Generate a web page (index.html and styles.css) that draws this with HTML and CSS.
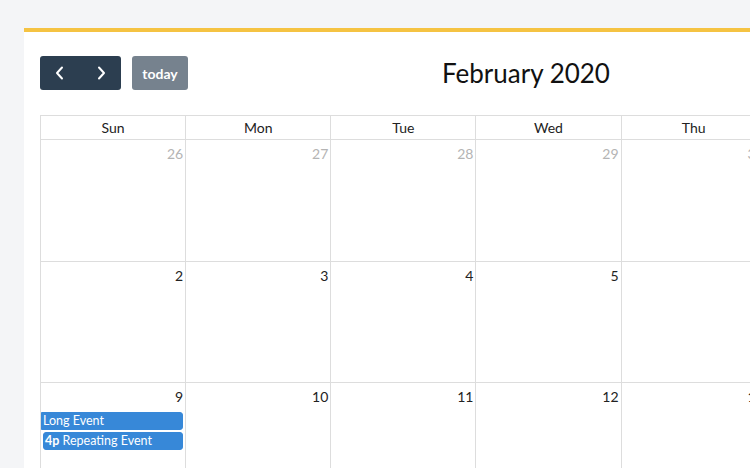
FILE: index.html
```html
<!DOCTYPE html>
<html lang="en">
<head>
<meta charset="utf-8">
<title>Calendar</title>
<link rel="stylesheet" href="styles.css">
</head>
<body>
<div class="card">
  <div class="toolbar">
    <div class="chunk">
      <div class="btn-group">
        <button class="btn btn-dark" aria-label="prev">
          <svg width="10" height="14" viewBox="0 0 10 14"><path d="M7 1.5 L2 7 L7 12.5" fill="none" stroke="#fff" stroke-width="2" stroke-linecap="round" stroke-linejoin="round"/></svg>
        </button>
        <button class="btn btn-dark" aria-label="next">
          <svg width="10" height="14" viewBox="0 0 10 14"><path d="M3 1.5 L8 7 L3 12.5" fill="none" stroke="#fff" stroke-width="2" stroke-linecap="round" stroke-linejoin="round"/></svg>
        </button>
      </div>
      <button class="btn btn-today">today</button>
    </div>
    <h2 class="title">February 2020</h2>
  </div>
  <table class="grid">
    <thead>
      <tr><th>Sun</th><th>Mon</th><th>Tue</th><th>Wed</th><th>Thu</th><th>Fri</th><th>Sat</th></tr>
    </thead>
    <tbody>
      <tr class="r1">
        <td><div class="num other">26</div></td>
        <td><div class="num other">27</div></td>
        <td><div class="num other">28</div></td>
        <td><div class="num other">29</div></td>
        <td><div class="num other">30</div></td>
        <td><div class="num other">31</div></td>
        <td><div class="num">1</div></td>
      </tr>
      <tr>
        <td><div class="num">2</div></td>
        <td><div class="num">3</div></td>
        <td><div class="num">4</div></td>
        <td><div class="num">5</div></td>
        <td><div class="num">6</div></td>
        <td><div class="num">7</div></td>
        <td><div class="num">8</div></td>
      </tr>
      <tr>
        <td>
          <div class="num">9</div>
          <div class="event not-start">Long Event</div>
          <div class="event"><b>4p</b> Repeating Event</div>
        </td>
        <td><div class="num">10</div></td>
        <td><div class="num">11</div></td>
        <td><div class="num">12</div></td>
        <td><div class="num">13</div></td>
        <td><div class="num">14</div></td>
        <td><div class="num">15</div></td>
      </tr>
    </tbody>
  </table>
</div>
</body>
</html>
```
FILE: styles.css
```css
html, body {
  margin: 0;
  padding: 0;
  overflow: hidden;
}
body {
  background: #f4f5f7;
  font-family: Lato, "Open Sans", sans-serif;
  color: #222;
  padding-top: 28px;
  padding-left: 24px;
}
.card {
  width: max-content;
  background: #fff;
  border-top: 4px solid #f5c343;
  padding: 24px 16px;
}
.toolbar {
  display: flex;
  align-items: center;
  height: 34px;
  margin-bottom: 25px;
}
.chunk {
  display: flex;
  gap: 11px;
}
.btn-group {
  display: flex;
}
.btn {
  border: none;
  height: 34px;
  font-family: inherit;
  font-size: 14px;
  font-weight: 700;
  color: #fff;
  padding: 0;
  display: flex;
  align-items: center;
  justify-content: center;
}
.btn-dark {
  background: #2c3e50;
  width: 40.5px;
}
.btn-dark:first-child {
  border-radius: 3px 0 0 3px;
}
.btn-dark:last-child {
  border-radius: 0 3px 3px 0;
}
.btn-today {
  background: #76828e;
  width: 56px;
  border-radius: 3px;
}
.title {
  margin: 0 0 0 254px;
  font-size: 26px;
  font-weight: 400;
  color: #111;
}
.grid {
  border-collapse: collapse;
  table-layout: fixed;
  width: 1017px;
}
.grid th, .grid td {
  border: 1px solid #ddd;
  padding: 0;
}
.grid th {
  height: 23px;
  font-size: 14px;
  font-weight: 400;
  text-align: center;
}
.grid td {
  height: 120px;
  vertical-align: top;
}
.grid .r1 td {
  height: 121px;
}
.num {
  text-align: right;
  font-size: 14px;
  line-height: 20px;
  padding: 4px 2px 0 0;
}
.num.other {
  color: #b4b4b4;
}
.event {
  margin: 5px 2px 0 2px;
  background: #3788d8;
  border: 1px solid #3788d8;
  border-radius: 3px;
  color: #fff;
  font-size: 12.5px;
  line-height: 16px;
  padding: 0 1px;
}
.event + .event {
  margin-top: 2px;
}
.event.not-start {
  margin-left: 0;
  border-radius: 0 3px 3px 0;
}
.event b {
  font-weight: 700;
}
```
